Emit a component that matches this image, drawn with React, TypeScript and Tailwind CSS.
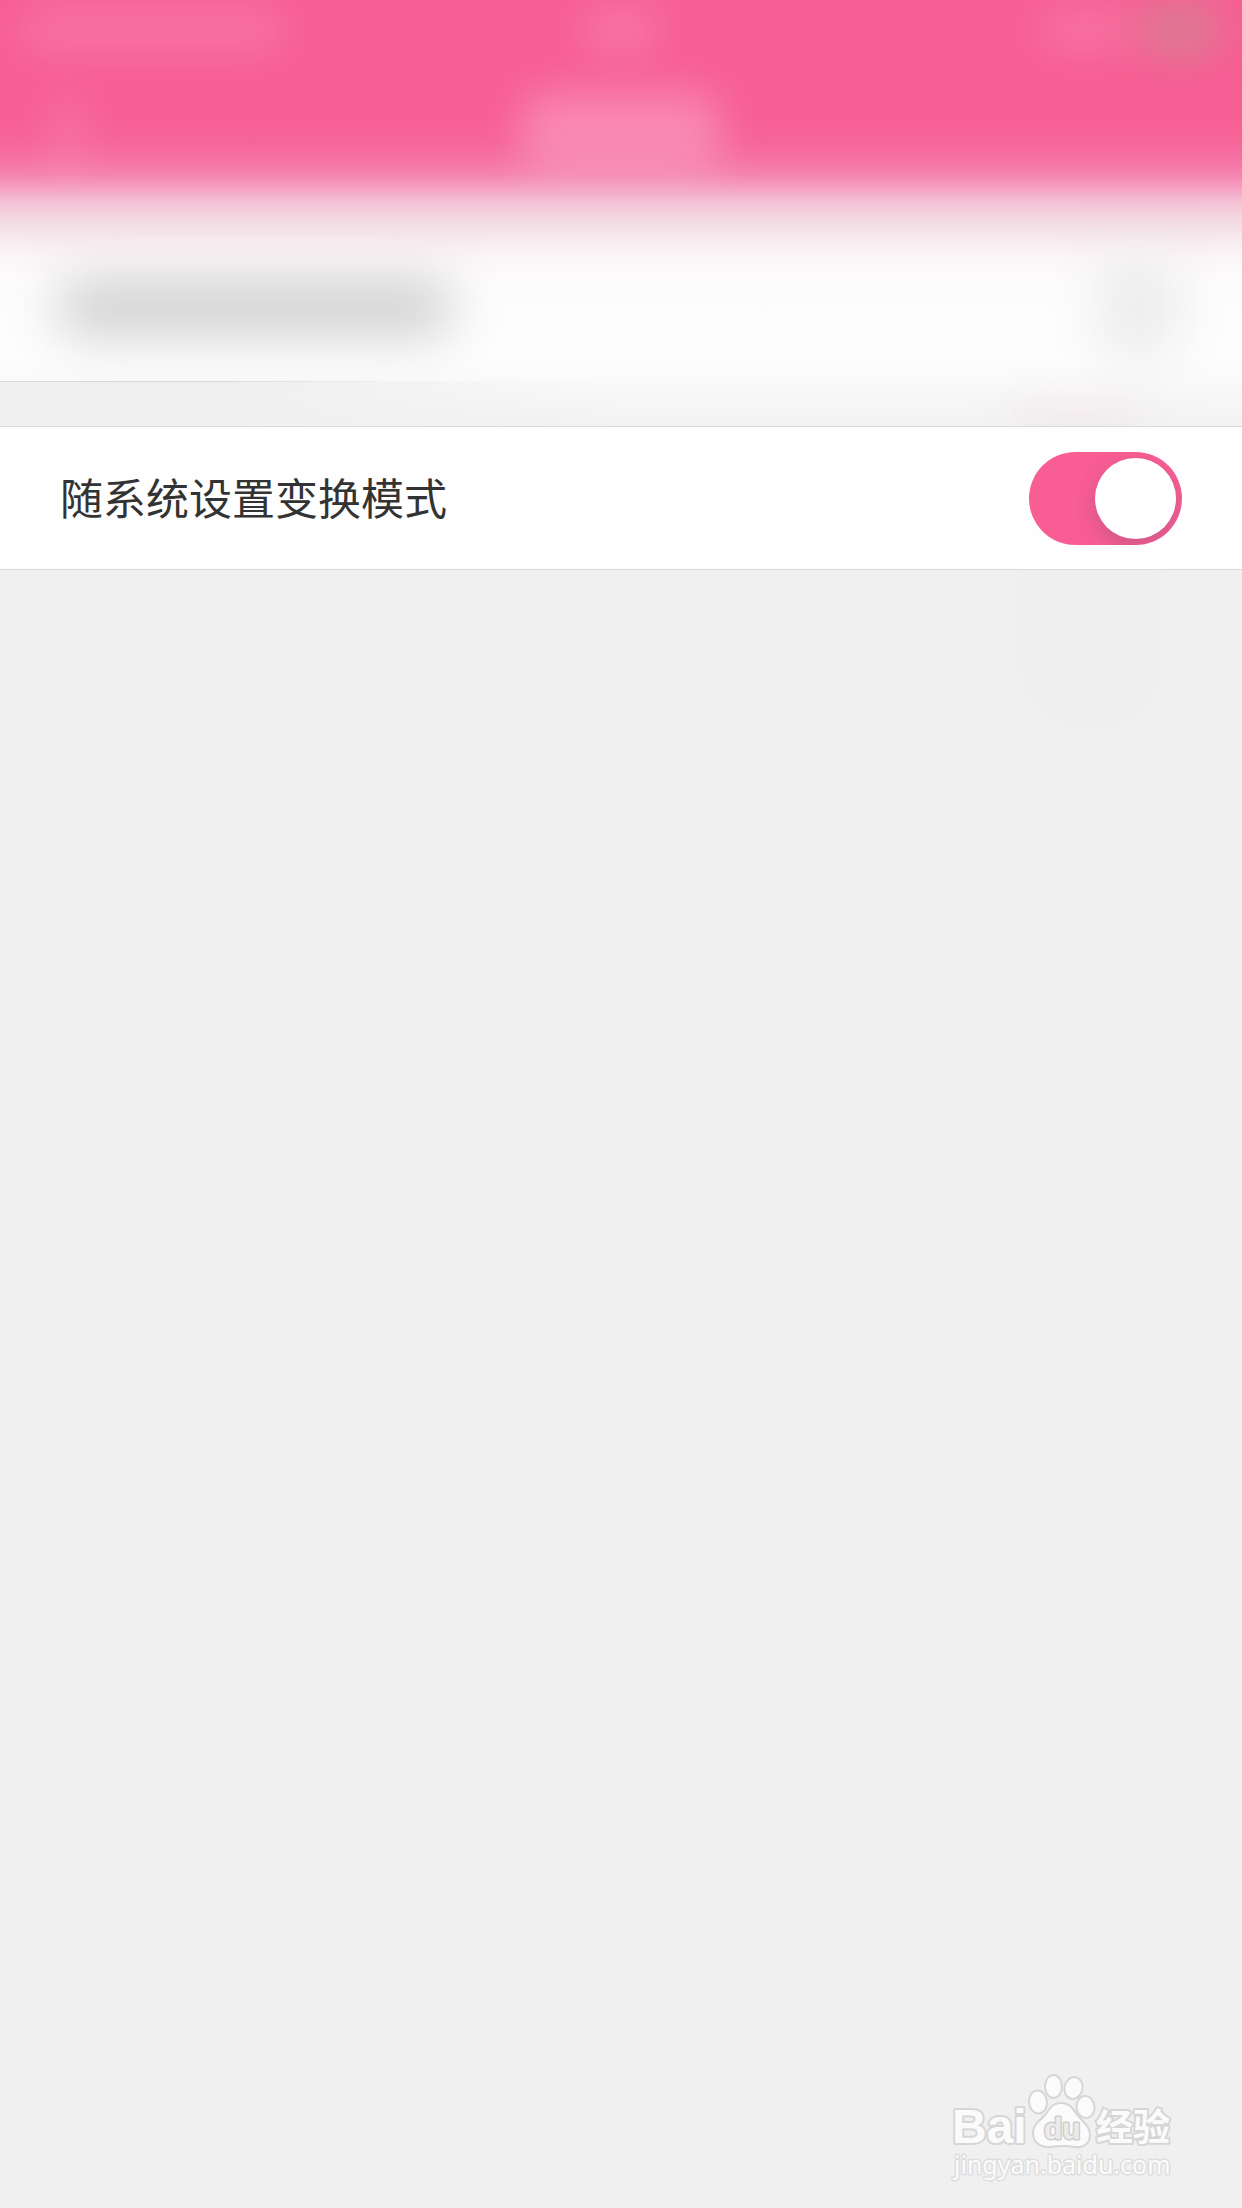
import { useState } from "react";

function Smudge({ className }: { className: string }) {
  return <span aria-hidden="true" className={"block shrink-0 " + className} />;
}

function ObscuredTop() {
  return (
    <div className="relative bg-[linear-gradient(to_bottom,#f75e94_0px,#f75e94_115px,#f66498_140px,#f670a1_158px,#f583ad_174px,#f5a1c1_188px,#f4bdd3_200px,#f4d3df_215px,#f4e2e8_230px,#f8edf1_242px,#fbf7f8_260px,#fdfcfc_285px,#fdfdfd_355px,#fafafa_381px,#f2f2f2_426px)]">
      <header className="h-[192px] overflow-hidden">
        <div className="grid h-[60px] grid-cols-3 items-center pl-5 pr-5">
          <Smudge className="h-11 w-[266px] rounded-full bg-white/14 blur-[20px]" />
          <Smudge className="h-12 w-[80px] justify-self-center rounded-full bg-white/16 blur-[20px]" />
          <div className="flex items-center justify-self-end">
            <Smudge className="h-10 w-[100px] rounded-full bg-white/14 blur-[20px]" />
            <Smudge className="h-14 w-[84px] rounded-full bg-[#c99095]/60 blur-[20px]" />
          </div>
        </div>
        <div className="grid h-[132px] grid-cols-3 items-center px-12 pt-2">
          <Smudge className="h-20 w-10 rounded-full bg-white/10 blur-[20px]" />
          <Smudge className="h-[76px] w-[200px] justify-self-center rounded-3xl bg-white/27 blur-[22px]" />
        </div>
      </header>
      <div className="flex h-[189px] items-center justify-between pl-[60px] pr-[68px] pt-[40px]">
        <Smudge className="h-[56px] w-[390px] rounded-2xl bg-[#cfcfcf] blur-[26px]" />
        <Smudge className="h-[100px] w-[72px] rounded-2xl bg-[#ebebec] blur-[26px]" />
      </div>
      <div className="h-[45px] bg-[linear-gradient(to_right,#f0f0f0_0px,#f0f0f0_240px,transparent_620px)]">
        <div className="h-px w-full bg-[linear-gradient(to_right,#dadada_0px,#dcdcdc_220px,transparent_390px)]" />
      </div>
      <div
        aria-hidden="true"
        className="pointer-events-none absolute bottom-0 right-[100px] h-6 w-[130px] rounded-full bg-[#f2dfe4]/60 blur-[18px]"
      />
    </div>
  );
}

function SettingRow() {
  const [on, setOn] = useState(true);
  return (
    <label className="relative z-10 flex h-[144px] cursor-pointer items-center justify-between border-y border-[#d9d9d9] bg-[#fefefe] px-[60px]">
      <span className="pb-1 text-[43px] leading-[64px] text-[#333333]">随系统设置变换模式</span>
      <span className="relative block h-[93px] w-[153px] shrink-0">
        <input
          type="checkbox"
          role="switch"
          checked={on}
          onChange={(e) => setOn(e.target.checked)}
          className="peer block h-full w-full cursor-pointer appearance-none rounded-full bg-[#d6d6d6] checked:bg-[#f85d94]"
        />
        <span className="pointer-events-none absolute inset-0 overflow-hidden rounded-full peer-checked:[&>span]:translate-x-[60px]">
          <span className="absolute left-[6px] top-[6px] block size-[81px] rounded-full bg-white shadow-[0_8px_20px_rgba(90,70,100,0.26)]" />
        </span>
      </span>
    </label>
  );
}

function Watermark() {
  return (
    <a
      href="#jingyan"
      aria-label="Baidu 经验 jingyan.baidu.com"
      className="absolute bottom-[18px] right-[54px] block"
    >
      <svg
        width="240"
        height="116"
        viewBox="0 0 240 116"
        fill="#fbfbfb"
        stroke="#d6d6d6"
        strokeWidth="4"
        strokeLinejoin="round"
        paintOrder="stroke"
        className="block"
      >
        <text x="4" y="69" fontSize="48" fontWeight="700" fontFamily='"Liberation Sans", sans-serif'>
          Bai
        </text>
        <g strokeWidth="4">
          <ellipse cx="90" cy="28" rx="8" ry="10.5" transform="rotate(-6 90 28)" />
          <ellipse cx="105.500" cy="12.500" rx="7.500" ry="10.500" />
          <ellipse cx="125.500" cy="14" rx="8" ry="10" transform="rotate(12 125.500 14)" />
          <ellipse cx="137.500" cy="33" rx="8" ry="10" transform="rotate(-6 137.500 33)" />
          <path d="M113 30c8 0 11 5 15 11 5 7 13 11 13 20 0 8-6 12-14 11-6-1-9-1-14-1s-8 1-13 1c-8 0-14-5-14-13 0-9 8-12 13-19 4-6 7-10 14-10Z" />
        </g>
        <text
          x="96"
          y="65"
          fontSize="30"
          fontWeight="700"
          strokeWidth="3"
          fill="#ebebeb"
          stroke="#cecece"
          fontFamily='"Liberation Sans", sans-serif'
        >
          du
        </text>
        <text x="148" y="67" fontSize="37" fontWeight="700" fontFamily='"Noto Sans CJK SC", sans-serif'>
          经验
        </text>
        <text
          x="6"
          y="100"
          fontSize="25"
          strokeWidth="3"
          stroke="#dedede"
          fontFamily='"Noto Sans", sans-serif'
        >
          jingyan.baidu.com
        </text>
      </svg>
    </a>
  );
}

export default function App() {
  return (
    <div className='relative min-h-screen overflow-hidden bg-[#f0f0f0] font-["Noto_Sans_CJK_SC",sans-serif]'>
      <ObscuredTop />
      <main>
        <SettingRow />
        <div className="flex justify-end pr-[84px]">
          <div aria-hidden="true" className="h-[156px] w-[136px] rounded-b-[64px] bg-[#efeeee] blur-[3px]" />
        </div>
      </main>
      <Watermark />
    </div>
  );
}
